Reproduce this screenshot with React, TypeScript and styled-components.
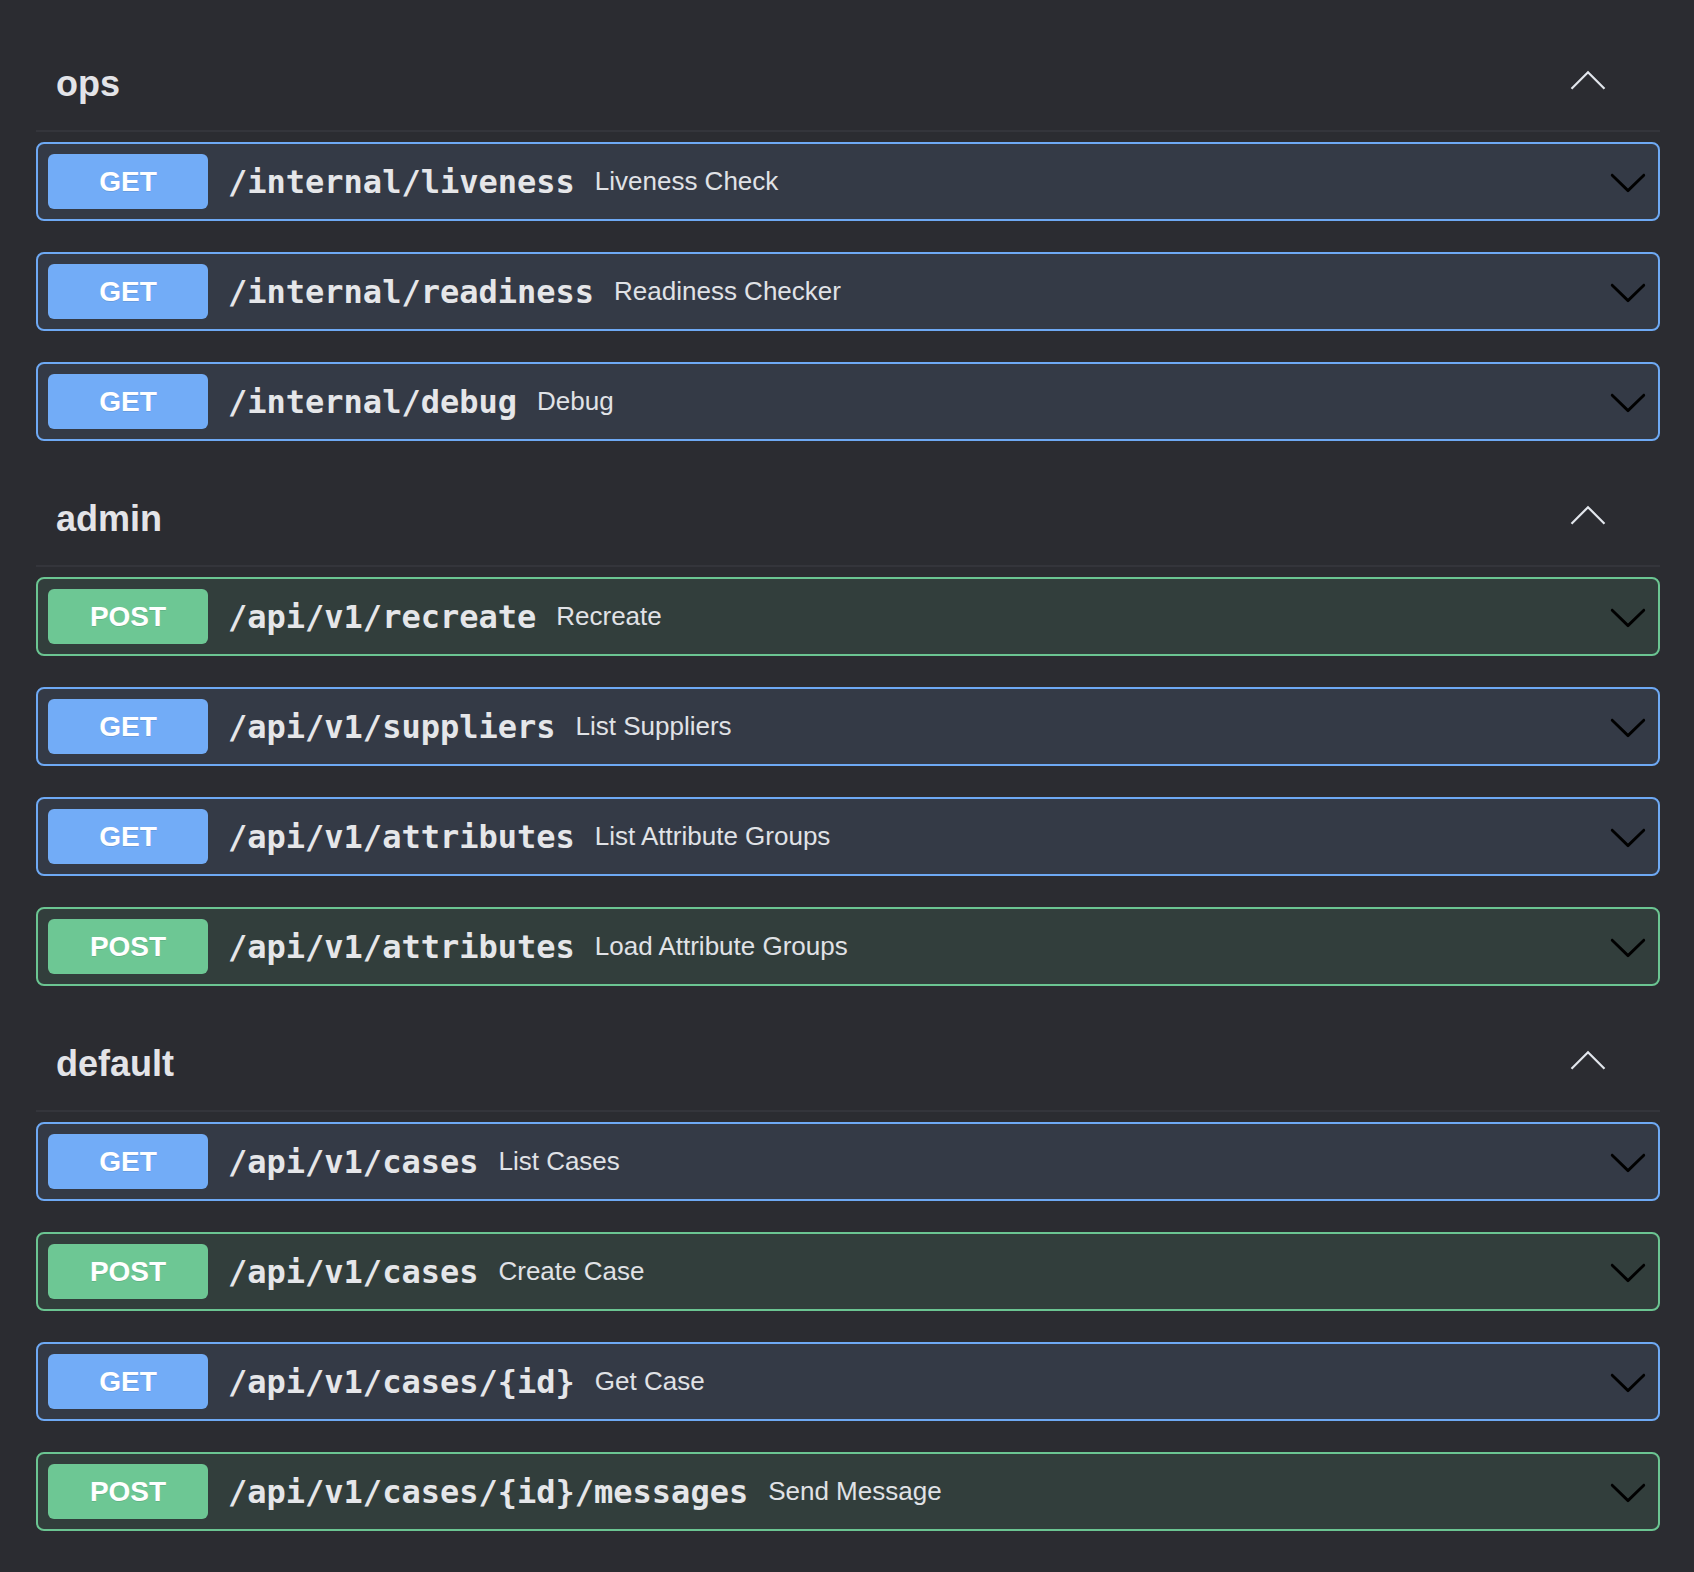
import styled, { createGlobalStyle } from "styled-components";

const GlobalStyle = createGlobalStyle`
  html, body {
    margin: 0;
    padding: 0;
    background-color: #2b2c31;
  }
  body {
    font-family: "Liberation Sans", Arial, sans-serif;
  }
`;

const colors = {
  GET: { badge: "#72acf7", border: "#6ea9f4", bg: "#343a46" },
  POST: { badge: "#6dc794", border: "#6bc592", bg: "#323e3c" },
};

type Method = keyof typeof colors;

interface IOperation {
  method: Method;
  path: string;
  summary: string;
}

interface ITag {
  name: string;
  operations: IOperation[];
}

const tags: ITag[] = [
  {
    name: "ops",
    operations: [
      { method: "GET", path: "/internal/liveness", summary: "Liveness Check" },
      { method: "GET", path: "/internal/readiness", summary: "Readiness Checker" },
      { method: "GET", path: "/internal/debug", summary: "Debug" },
    ],
  },
  {
    name: "admin",
    operations: [
      { method: "POST", path: "/api/v1/recreate", summary: "Recreate" },
      { method: "GET", path: "/api/v1/suppliers", summary: "List Suppliers" },
      { method: "GET", path: "/api/v1/attributes", summary: "List Attribute Groups" },
      { method: "POST", path: "/api/v1/attributes", summary: "Load Attribute Groups" },
    ],
  },
  {
    name: "default",
    operations: [
      { method: "GET", path: "/api/v1/cases", summary: "List Cases" },
      { method: "POST", path: "/api/v1/cases", summary: "Create Case" },
      { method: "GET", path: "/api/v1/cases/{id}", summary: "Get Case" },
      { method: "POST", path: "/api/v1/cases/{id}/messages", summary: "Send Message" },
    ],
  },
];

const Page = styled.div`
  min-height: 1572px;
  box-sizing: border-box;
  padding: 52px 34px 0 36px;
  display: flex;
  flex-direction: column;
  gap: 46px;
`;

const Section = styled.section`
  display: flex;
  flex-direction: column;
`;

const TagHeader = styled.div`
  display: flex;
  align-items: center;
  justify-content: space-between;
  padding: 10px 52px 24px 20px;
  border-bottom: 2px solid #34353b;
`;

const TagName = styled.h3`
  margin: 0;
  font-size: 36px;
  line-height: 44px;
  font-weight: 700;
  color: #e3e4e8;
`;

const OpList = styled.div`
  display: flex;
  flex-direction: column;
  gap: 31px;
  margin-top: 10px;
`;

const OpBlock = styled.div<{ $method: Method }>`
  display: flex;
  align-items: center;
  padding: 10px;
  border: 2px solid ${(p) => colors[p.$method].border};
  border-radius: 8px;
  background-color: ${(p) => colors[p.$method].bg};
`;

const MethodBadge = styled.span<{ $method: Method }>`
  flex: none;
  width: 160px;
  height: 55px;
  display: flex;
  align-items: center;
  justify-content: center;
  border-radius: 6px;
  background-color: ${(p) => colors[p.$method].badge};
  color: #fff;
  font-size: 28px;
  font-weight: 700;
  text-shadow: 0 1px 0 rgba(0, 0, 0, 0.1);
`;

const OpPath = styled.span`
  padding: 0 20px;
  font-family: "DejaVu Sans Mono", "Liberation Mono", monospace;
  font-size: 32px;
  font-weight: 700;
  color: #e5e6e9;
`;

const OpSummary = styled.span`
  flex: 1;
  font-size: 26px;
  color: #e0e2e6;
`;

const Arrow = styled.svg`
  flex: none;
  width: 40px;
  height: 40px;
`;

const UpArrow = () => (
  <Arrow viewBox="0 0 40 40">
    <polyline
      points="3.5,24.8 20,8.2 36.5,24.8"
      fill="none"
      stroke="#e2e6ec"
      strokeWidth="2.2"
    />
  </Arrow>
);

const DownArrow = () => (
  <Arrow viewBox="0 0 20 20">
    <path
      fill="#000"
      d="M17.418 6.109c.272-.268.709-.268.979 0s.271.701 0 .969l-7.908 7.83c-.27.268-.707.268-.979 0l-7.908-7.83c-.27-.268-.27-.701 0-.969.271-.268.709-.268.979 0L10 13.25l7.418-7.141z"
    />
  </Arrow>
);

const App = () => {
  return (
    <>
      <GlobalStyle />
      <Page>
        {tags.map((tag) => (
          <Section key={tag.name}>
            <TagHeader>
              <TagName>{tag.name}</TagName>
              <UpArrow />
            </TagHeader>
            <OpList>
              {tag.operations.map((op) => (
                <OpBlock key={op.method + op.path} $method={op.method}>
                  <MethodBadge $method={op.method}>{op.method}</MethodBadge>
                  <OpPath>{op.path}</OpPath>
                  <OpSummary>{op.summary}</OpSummary>
                  <DownArrow />
                </OpBlock>
              ))}
            </OpList>
          </Section>
        ))}
      </Page>
    </>
  );
};

export default App;
